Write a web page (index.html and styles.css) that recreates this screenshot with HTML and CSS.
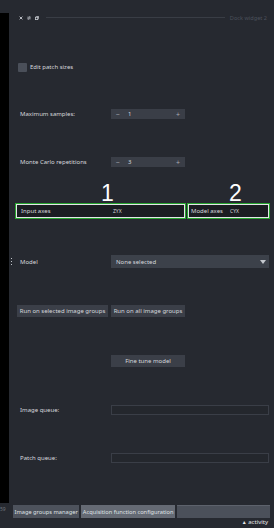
FILE: index.html
```html
<!DOCTYPE html>
<html>
<head>
    <title>Dock widget 2</title>
    <link rel="stylesheet" href="styles.css">
</head>
<body>
    <div class="workspace">
        <div class="side"></div>
        <div class="dock">
            <div class="titlebar">
                <span class="tb-icons">
                    <svg width="4" height="4" viewBox="0 0 4 4"><path d="M0.6 0.6L3.4 3.4M3.4 0.6L0.6 3.4" stroke="#c8ccd2" stroke-width="0.9"/></svg>
                    <svg width="4" height="4" viewBox="0 0 4 4"><path d="M0.3 1.2H3.2M2.4 0.4L3.4 1.2L2.4 2M3.7 2.8H0.8M1.6 2L0.6 2.8L1.6 3.6" stroke="#c8ccd2" stroke-width="0.7" fill="none"/></svg>
                    <svg width="4" height="4" viewBox="0 0 4 4"><rect x="0.4" y="1.2" width="2.4" height="2.4" stroke="#c8ccd2" stroke-width="0.8" fill="none"/><path d="M1.2 0.4H3.6V2.8" stroke="#c8ccd2" stroke-width="0.8" fill="none"/></svg>
                </span>
                <span class="tb-line"></span>
                <span class="tb-title">Dock widget 2</span>
            </div>

            <div class="check-row"><span class="checkbox"></span>Edit patch sizes</div>

            <div class="row row-max">
                <span class="label">Maximum samples:</span>
                <div class="spin"><span class="spin-btn">&minus;</span><span class="spin-val">1</span><span class="spin-btn">+</span></div>
            </div>

            <div class="row row-mc">
                <span class="label">Monte Carlo repetitions</span>
                <div class="spin"><span class="spin-btn">&minus;</span><span class="spin-val">3</span><span class="spin-btn">+</span></div>
            </div>

            <div class="axes">
                <div class="digits">
                    <span class="digit digit-1">1</span>
                    <span class="digit digit-2">2</span>
                </div>
                <div class="axes-boxes">
                    <div class="axis-box axis-input"><span class="axis-label">Input axes</span><span class="axis-val">ZYX</span></div>
                    <div class="axis-box axis-model"><span class="axis-label">Model axes</span><span class="axis-val">CYX</span></div>
                </div>
            </div>

            <div class="row row-model">
                <span class="handle"><i></i><i></i><i></i></span>
                <span class="label label-model">Model</span>
                <div class="combo"><span>None selected</span><span class="combo-arrow"></span></div>
            </div>

            <div class="row row-run">
                <button class="btn btn-selected">Run on selected image groups</button>
                <button class="btn btn-all">Run on all image groups</button>
            </div>

            <div class="row row-fine">
                <button class="btn btn-fine">Fine tune model</button>
            </div>

            <div class="row row-queue">
                <span class="label">Image queue:</span>
                <div class="queue"></div>
            </div>

            <div class="row row-queue">
                <span class="label">Patch queue:</span>
                <div class="queue"></div>
            </div>
        </div>
    </div>

    <div class="tabbar">
        <span class="tab-num">59</span>
        <span class="tab">Image groups manager</span>
        <span class="tab tab-active">Acquisition function configuration</span>
        <span class="tab-rest"></span>
    </div>
    <div class="status"><span class="status-arrow">&#9650;</span> activity</div>
</body>
</html>
```

FILE: styles.css
```css
body {
    margin: 0;
    width: 274px;
    height: 528px;
    overflow: hidden;
    background-color: #262930;
    color: #d6d8dc;
    font-family: "Noto Sans", "Liberation Sans", sans-serif;
    font-size: 6px;
}
.workspace {
    display: flex;
    padding-top: 13px;
    height: 490px;
}
.side {
    width: 9px;
    background-color: #000;
}
.dock {
    flex: 1;
    padding-right: 5px;
    display: flex;
    flex-direction: column;
}
.titlebar {
    height: 9px;
    display: flex;
    align-items: center;
    padding-left: 10px;
}
.tb-icons {
    display: flex;
    gap: 4px;
}
.tb-icons svg {
    display: block;
}
.tb-line {
    flex: 1;
    height: 1px;
    background-color: #393d45;
    margin: 0 5px 0 7px;
}
.tb-title {
    color: #4c515c;
    font-size: 5.6px;
    margin-right: 2px;
}
.check-row {
    margin-top: 40px;
    height: 10px;
    display: flex;
    align-items: center;
    padding-left: 9px;
}
.checkbox {
    width: 9px;
    height: 9px;
    background-color: #4a4f59;
    border-radius: 1px;
    margin-right: 3px;
}
.row {
    display: flex;
    align-items: center;
}
.label {
    width: 102px;
    padding-left: 11px;
    box-sizing: border-box;
    flex-shrink: 0;
}
.row-max {
    margin-top: 37px;
    height: 10px;
}
.row-mc {
    margin-top: 38px;
    height: 10px;
}
.spin {
    width: 74px;
    height: 10px;
    background-color: #3a3e47;
    display: flex;
    align-items: center;
    padding: 0 3px;
    box-sizing: border-box;
}
.spin-btn {
    color: #a9adb4;
    font-size: 7px;
    width: 8px;
    text-align: center;
}
.spin-val {
    flex: 1;
    padding-left: 6px;
}
.axes {
    margin-top: 16px;
}
.digits {
    height: 20px;
    position: relative;
}
.digit {
    position: absolute;
    top: -3px;
    color: #fff;
    font-family: "Liberation Sans", sans-serif;
    font-size: 23px;
}
.digit-1 {
    left: 92px;
}
.digit-2 {
    left: 220px;
}
.axes-boxes {
    display: flex;
    gap: 1px;
    padding-left: 6px;
    margin-right: -1px;
}
.axis-box {
    height: 16px;
    box-sizing: border-box;
    border: 1px solid #27a52f;
    box-shadow: inset 0 0 0 1px #e4e6e8;
    background-color: #1b1d22;
    display: flex;
    align-items: center;
}
.axis-input {
    width: 171px;
    padding-left: 5px;
}
.axis-input .axis-label {
    width: 92px;
}
.axis-model {
    flex: 1;
    padding-left: 3px;
}
.axis-model .axis-label {
    width: 39px;
}
.axis-val {
    font-size: 5px;
}
.row-model {
    margin-top: 36px;
    height: 13px;
}
.handle {
    display: flex;
    flex-direction: column;
    gap: 2px;
    margin-left: 2px;
    width: 1px;
}
.handle i {
    width: 1px;
    height: 1px;
    background-color: #c0c4ca;
}
.label-model {
    width: 99px;
    padding-left: 8px;
}
.combo {
    flex: 1;
    height: 13px;
    background-color: #3c414a;
    display: flex;
    align-items: center;
    justify-content: space-between;
    padding: 0 3px 0 5px;
}
.combo-arrow {
    width: 0;
    height: 0;
    border-left: 3px solid transparent;
    border-right: 3px solid transparent;
    border-top: 4px solid #c4c8ce;
}
.btn {
    height: 12px;
    padding: 0;
    border: none;
    background-color: #3b3f48;
    color: #d6d8dc;
    font-family: inherit;
    font-size: 6px;
}
.row-run {
    margin-top: 37px;
    height: 12px;
    padding-left: 8px;
    gap: 3px;
}
.btn-selected {
    width: 91px;
}
.btn-all {
    width: 74px;
}
.row-fine {
    margin-top: 38px;
    height: 12px;
    padding-left: 102px;
}
.btn-fine {
    width: 74px;
}
.row-queue {
    margin-top: 38px;
    height: 10px;
}
.queue {
    flex: 1;
    height: 10px;
    box-sizing: border-box;
    border: 1px solid #3a3e47;
    background-color: #24272d;
}
.tabbar {
    margin-top: 2px;
    height: 13px;
    display: flex;
    align-items: stretch;
    padding-right: 4px;
}
.tab-num {
    width: 13px;
    color: #6f747d;
    font-size: 5px;
    line-height: 8px;
}
.tab {
    background-color: #4d525c;
    color: #dfe1e4;
    font-size: 5.7px;
    display: flex;
    align-items: center;
    padding: 0 1.5px;
    margin-right: 2px;
}
.tab-active {
    background-color: #656a74;
}
.tab-rest {
    flex: 1;
    background-color: #4b505a;
    border-top: 1px solid #5d626c;
}
.status {
    height: 9px;
    text-align: right;
    padding-right: 6px;
    line-height: 9px;
    color: #e6e8ea;
}
.status-arrow {
    font-size: 5px;
}
```
